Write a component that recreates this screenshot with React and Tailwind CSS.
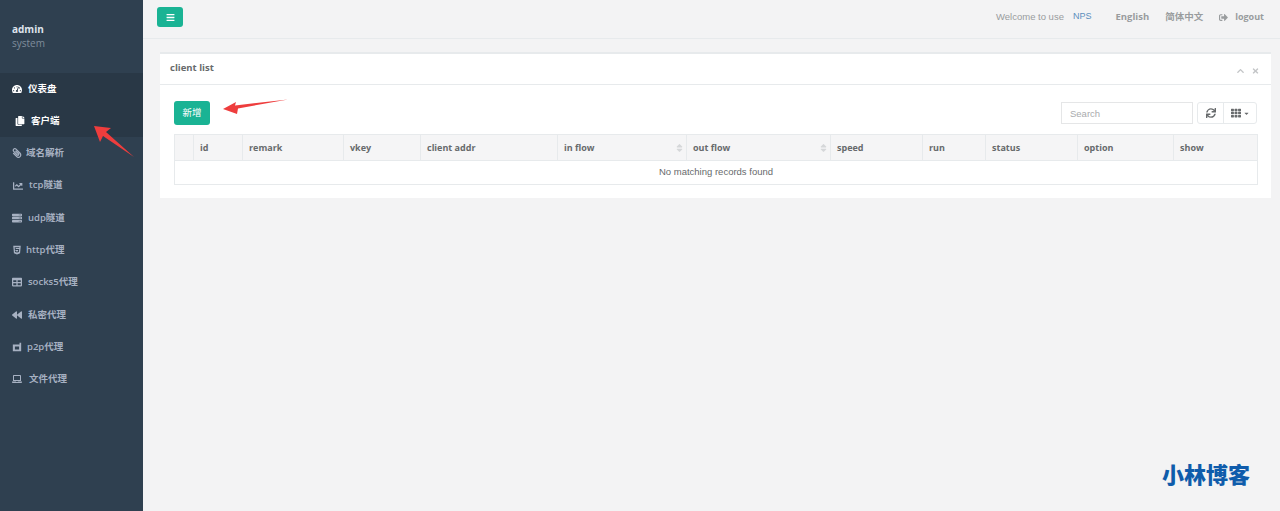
import {
  FaBars, FaBackward, FaCaretDown, FaChartLine, FaChevronUp, FaCopy, FaHtml5, FaLaptop, FaPaperclip,
  FaServer, FaSignOutAlt, FaSort, FaSync, FaTable, FaTachometerAlt, FaTh, FaTimes,
} from 'react-icons/fa';

const fontStack = "font-['Open_Sans','Noto_Sans_CJK_SC',sans-serif]";

function P2pIcon({ className }) {
  return (
    <svg viewBox="0 0 12 12" className={className} fill="currentColor">
      <path d="M1 3h8V1h2v10H1zM3.500 5.500v3.500h5v-3.500z" fillRule="evenodd" />
    </svg>
  );
}

const menu = [
  { label: '仪表盘', icon: FaTachometerAlt, cls: 'pl-3 gap-[6px]', active: true },
  { label: '客户端', icon: FaCopy, cls: 'pl-[15px] gap-[6px]', active: true, strong: true },
  { label: '域名解析', icon: FaPaperclip, cls: 'pl-3 gap-[4px]', iconCls: '-scale-x-100' },
  { label: 'tcp隧道', icon: FaChartLine, cls: 'pl-3 gap-[5px]', iconCls: 'w-[12px]' },
  { label: 'udp隧道', icon: FaServer, cls: 'pl-3 gap-[6px]' },
  { label: 'http代理', icon: FaHtml5, cls: 'pl-3 gap-[4px]' },
  { label: 'socks5代理', icon: FaTable, cls: 'pl-3 gap-[6px]' },
  { label: '私密代理', icon: FaBackward, cls: 'pl-3 gap-[6px]' },
  { label: 'p2p代理', icon: P2pIcon, cls: 'pl-3 gap-[5px]' },
  { label: '文件代理', icon: FaLaptop, cls: 'pl-3 gap-[7px]' },
];

const columns = [
  { label: '', width: 'w-[19px]' },
  { label: 'id', width: 'w-[49px]' },
  { label: 'remark', width: 'w-[101px]' },
  { label: 'vkey', width: 'w-[77px]' },
  { label: 'client addr', width: 'w-[137px]' },
  { label: 'in flow', width: 'w-[129px]', sort: true },
  { label: 'out flow', width: 'w-[144px]', sort: true },
  { label: 'speed', width: 'w-[92px]' },
  { label: 'run', width: 'w-[63px]' },
  { label: 'status', width: 'w-[92px]' },
  { label: 'option', width: 'w-[96px]' },
  { label: 'show', width: 'w-[84px]' },
];

function Sidebar() {
  return (
    <aside className="w-[143px] shrink-0 bg-[#2f4050] min-h-screen">
      <div className="h-[72.500px] pl-3 pt-[23px]">
        <div className="text-[10px] leading-[13px] font-bold text-[#dfe4ed]">admin</div>
        <div className="text-[10px] leading-[13px] mt-[1px] text-[#7f8d9c]">system</div>
      </div>
      {menu.map((item) => {
        const Icon = item.icon;
        return (
          <div
            key={item.label}
            className={`h-[32.300px] flex items-center text-[9.500px] font-semibold ${item.cls} ${
              item.active ? 'bg-[#293846] text-white' : 'text-[#a7b1c2]'
            }`}
          >
            <Icon className={`w-[10px] h-[10px] ${item.iconCls || ''}`} />
            <span className={item.strong ? 'font-bold' : ''}>{item.label}</span>
          </div>
        );
      })}
    </aside>
  );
}

function TopBar() {
  return (
    <div className="h-[39px] border-b border-[#e7eaec] flex items-center justify-between pl-[14px] pr-[16px] pb-[4px]">
      <button className="w-[26px] h-[20px] bg-[#1ab394] rounded-[3px] flex items-center justify-center text-white">
        <FaBars className="w-[9px] h-[9px]" />
      </button>
      <div className="flex items-center text-[9.500px] text-[#999c9e]">
        <span className="font-['Liberation_Sans',sans-serif]">Welcome to use</span>
        <span className="ml-[9px] text-[9px] text-[#5b8fbd] font-['Liberation_Sans',sans-serif]">NPS</span>
        <span className="ml-[24px] font-bold">English</span>
        <span className="ml-[16px] font-semibold">简体中文</span>
        <FaSignOutAlt className="ml-[16px] w-[9px] h-[9px]" />
        <span className="ml-[7px] text-[9px] font-bold">logout</span>
      </div>
    </div>
  );
}

function ClientTable() {
  return (
    <table className="w-[1083px] table-fixed border-collapse border border-[#e7eaec] bg-white">
      <thead>
        <tr className="h-[26px] bg-[#f5f5f6]">
          {columns.map((col, i) => (
            <th
              key={i}
              className={`${col.width} relative border-r border-b border-[#e7eaec] pl-[6px] text-left text-[9px] font-bold text-[#676a6c]`}
            >
              {col.label}
              {col.sort && <FaSort className="absolute right-[2px] top-[8px] w-[9px] h-[10px] text-[#d5d7d9]" />}
            </th>
          ))}
        </tr>
      </thead>
      <tbody>
        <tr className="h-[24px]">
          <td colSpan={12} className="text-center text-[9.500px] text-[#676a6c] font-['Liberation_Sans',sans-serif]">
            No matching records found
          </td>
        </tr>
      </tbody>
    </table>
  );
}

function ClientCard() {
  return (
    <section className="ml-[17px] mr-[9px] mt-[13px] bg-white border-t-2 border-[#e7eaec]">
      <div className="h-[31px] border-b border-[#e7eaec] flex items-center justify-between pl-[10px] pr-[12px]">
        <h5 className="text-[9.500px] font-bold text-[#676a6c] pb-[1px]">client list</h5>
        <div className="flex items-center gap-[6px] mt-[3px] text-[#c4c6c8]">
          <FaChevronUp className="w-[11px] h-[8px]" />
          <FaTimes className="w-[7px] h-[8px]" />
        </div>
      </div>
      <div className="pl-[14px] pr-[14px] pt-[16px] pb-[13px]">
        <div className="flex items-center justify-between h-[24px] mb-[9px]">
          <button className="w-[36px] h-[24px] bg-[#1ab394] rounded-[3px] text-[9.500px] text-white">新增</button>
          <div className="flex items-center">
            <input
              placeholder="Search"
              className="w-[132px] h-[22px] border border-[#e5e6e7] px-[8px] text-[9.500px] outline-none placeholder:text-[#a9abad] font-['Liberation_Sans',sans-serif]"
            />
            <div className="ml-[4px] flex h-[22px] border border-[#e7eaec] rounded-[3px] text-[#676a6c]">
              <span className="w-[26px] flex items-center justify-center border-r border-[#e7eaec]">
                <FaSync className="w-[10px] h-[10px]" />
              </span>
              <span className="w-[32px] flex items-center justify-center gap-[2px]">
                <FaTh className="w-[10px] h-[10px]" />
                <FaCaretDown className="w-[7px] h-[7px]" />
              </span>
            </div>
          </div>
        </div>
        <ClientTable />
      </div>
    </section>
  );
}

function Arrows() {
  return (
    <svg className="absolute left-0 top-0 w-[300px] h-[170px] pointer-events-none" viewBox="0 0 300 170">
      <polygon points="223,109 236,102 235,105.500 288,99.500 238,108.500 237,114" fill="#ee3d3d" />
      <polygon points="94,126 111,128 106,132 134,157 103,136 100,142" fill="#ee3d3d" />
    </svg>
  );
}

export default function App() {
  return (
    <div className={`relative flex min-h-screen overflow-hidden bg-[#f3f3f4] ${fontStack}`}>
      <Sidebar />
      <main className="flex-1 min-w-0">
        <TopBar />
        <ClientCard />
      </main>
      <Arrows />
      <div className="absolute right-[30px] bottom-[25px] text-[22px] leading-[26px] font-black text-[#0f5cab] font-['Noto_Sans_CJK_SC',sans-serif]">
        小林博客
      </div>
    </div>
  );
}
